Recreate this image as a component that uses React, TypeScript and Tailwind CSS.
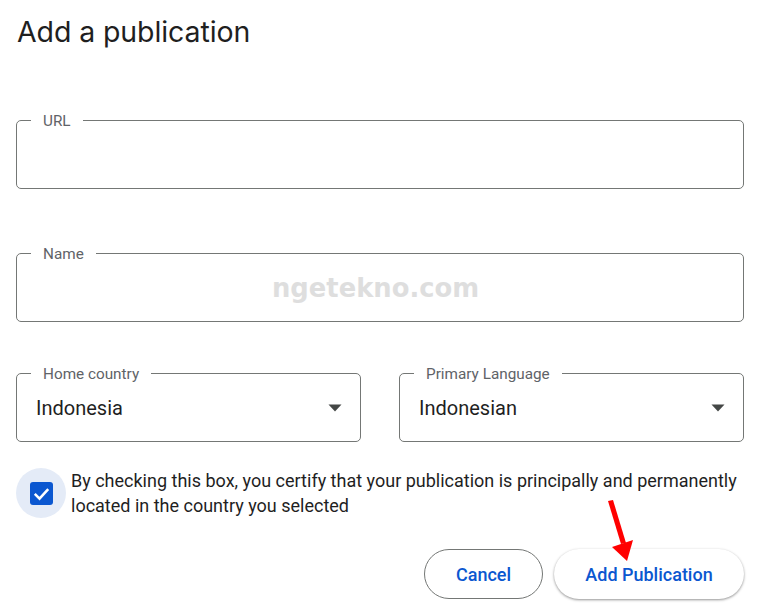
import { useState } from "react";

interface OutlinedFieldProps {
  label: string;
  value?: string;
  select?: boolean;
  children?: React.ReactNode;
}

function OutlinedField({ label, value, select, children }: OutlinedFieldProps) {
  return (
    <div className="relative h-[69px] rounded-[5px] border border-[#747775] flex items-center pl-[19px] pr-[17px]">
      {/* floating label sits on the top border */}
      <span className="absolute left-[14px] -top-[10px] bg-white px-[12px] text-[15.3px] leading-[20px] text-[#5f6368]">
        {label}
      </span>
      <span className="flex-1 text-[20px] text-[#1f1f1f] pt-[1px]">{value}</span>
      {select && (
        <svg width="16" height="8" viewBox="0 0 16 8">
          <path d="M1.5 0.5 L14.5 0.5 L8 7.5 Z" fill="#444746" />
        </svg>
      )}
      {children}
    </div>
  );
}

export default function App() {
  const [checked, setChecked] = useState(true);

  return (
    <div className="w-[759px] h-[611px] bg-white overflow-hidden font-['Roboto',sans-serif] pl-[16px] pr-[15px]">
      <h1 className="pt-[13px] pl-[1px] text-[28.5px] leading-[38px] text-[#1f1f1f] font-['Inter',sans-serif] tracking-[-0.1px]">
        Add a publication
      </h1>

      <div className="mt-[69px]">
        <OutlinedField label="URL" />
      </div>

      <div className="mt-[64px]">
        <OutlinedField label="Name">
          <span className="absolute left-[255px] top-[15px] text-[25.8px] font-bold text-[#dedede] font-['DejaVu_Sans',sans-serif] select-none">
            ngetekno.com
          </span>
        </OutlinedField>
      </div>

      <div className="mt-[51px] grid grid-cols-2 gap-[38px]">
        <OutlinedField label="Home country" value="Indonesia" select />
        <OutlinedField label="Primary Language" value="Indonesian" select />
      </div>

      <div className="mt-[26px] flex items-start gap-[5px]">
        <button
          onClick={() => setChecked(!checked)}
          className="w-[50px] h-[50px] shrink-0 rounded-full bg-[#e4ebf7] flex items-center justify-center"
          aria-label="certify"
        >
          <span className="w-[23px] h-[23px] rounded-[3px] bg-[#0b57d0] flex items-center justify-center">
            {checked && (
              <svg width="19" height="19" viewBox="0 0 24 24">
                <path d="M3.5 12.5 L9.5 18.5 L20.5 6.5" fill="none" stroke="#fff" strokeWidth="3.2" />
              </svg>
            )}
          </span>
        </button>
        <p className="text-[18px] leading-[25px] text-[#1f1f1f]">
          By checking this box, you certify that your publication is principally and permanently located in the country you selected
        </p>
      </div>

      <div className="relative mt-[31px] flex justify-end gap-[11px]">
        <button className="w-[119px] h-[50px] rounded-full border border-[#747775] text-[18px] font-medium text-[#0b57d0]">
          Cancel
        </button>
        <button className="w-[190px] h-[50px] rounded-full bg-white shadow-[0_1px_3px_rgba(0,0,0,0.3),0_1px_2px_rgba(0,0,0,0.15)] text-[18px] font-medium text-[#0b57d0]">
          Add Publication
        </button>

        {/* red annotation arrow */}
        <svg className="absolute left-[590px] -top-[50px]" width="50" height="70" viewBox="0 0 50 70">
          <path d="M2 2 L7 1 L20 44 L15 45 Z" fill="#ff0000" />
          <path d="M6 48 L27 41 L21 62 Z" fill="#ff0000" />
        </svg>
      </div>
    </div>
  );
}
